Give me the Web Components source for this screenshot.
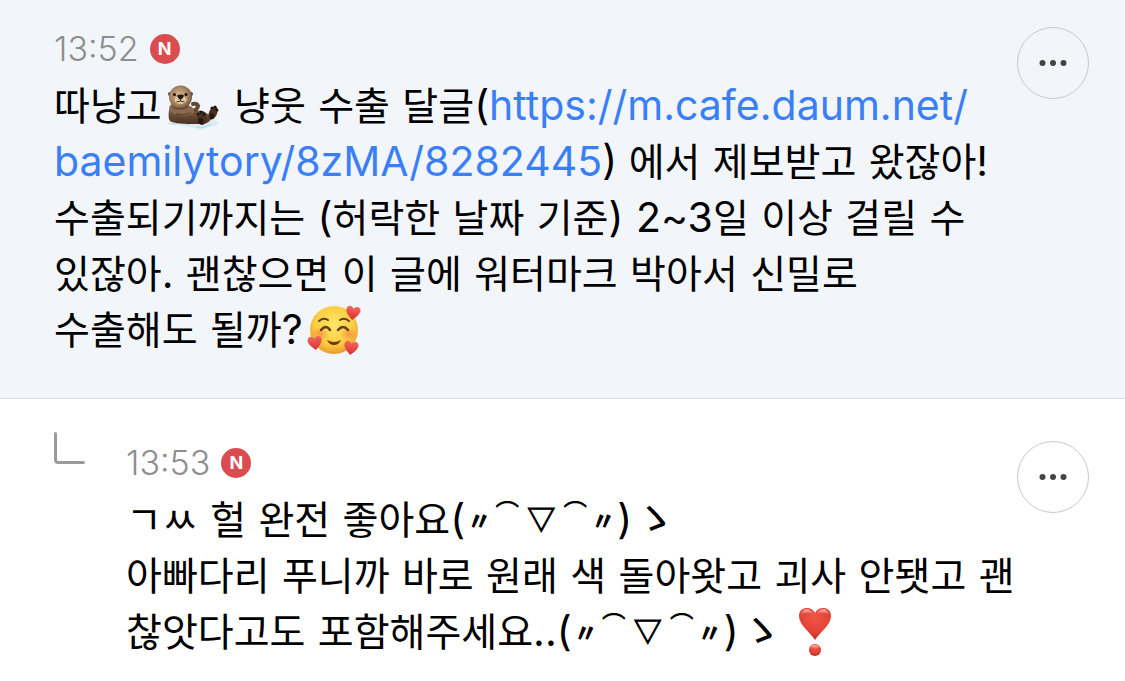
<!DOCTYPE html>
<html lang="ko">
<head>
<meta charset="utf-8">
<meta name="viewport" content="width=device-width, initial-scale=1">
<title>댓글</title>
<style>
  body {
    margin: 0;
    background-color: #fff;
    color: #000;
    font-family: Inter, "Noto Sans CJK KR", sans-serif;
  }
</style>
</head>
<body>
<main>
  <comment-item time="13:52" bg="new">
    <text-line>따냥고<emoji-icon name="otter"></emoji-icon> 냥웃 수출 달글<latin-text>(</latin-text><text-link href="https://m.cafe.daum.net/baemilytory/8zMA/8282445">https://m.cafe.daum.net/</text-link></text-line>
    <text-line><text-link href="https://m.cafe.daum.net/baemilytory/8zMA/8282445">baemilytory/8zMA/8282445</text-link><latin-text>) </latin-text>에서 제보받고 왔잖아<latin-text>!</latin-text></text-line>
    <text-line>수출되기까지는 <latin-text>(</latin-text>허락한 날짜 기준<latin-text>)</latin-text> <latin-text>2~3</latin-text>일 이상 걸릴 수</text-line>
    <text-line>있잖아<latin-text>.</latin-text> 괜찮으면 이 글에 워터마크 박아서 신밀로</text-line>
    <text-line>수출해도 될까<latin-text>?</latin-text><emoji-icon name="smile"></emoji-icon></text-line>
  </comment-item>
  <comment-item time="13:53" reply>
    <text-line>ㄱㅆ 헐 완전 좋아요<latin-text>(</latin-text><kao-face>〃</kao-face><kao-face part="arc">⌒</kao-face><kao-face part="mouth">▽</kao-face><kao-face part="arc">⌒</kao-face><kao-face>〃</kao-face><latin-text>)</latin-text><kao-face part="hand">ゝ</kao-face></text-line>
    <text-line>아빠다리 푸니까 바로 원래 색 돌아왓고 괴사 안됏고 괜</text-line>
    <text-line>찮앗다고도 포함해주세요<latin-text>..(</latin-text><kao-face>〃</kao-face><kao-face part="arc">⌒</kao-face><kao-face part="mouth">▽</kao-face><kao-face part="arc">⌒</kao-face><kao-face>〃</kao-face><latin-text>)</latin-text><kao-face part="hand">ゝ</kao-face><emoji-icon name="heart"></emoji-icon></text-line>
  </comment-item>
</main>

<script>
const comment_item = document.createElement('template');
comment_item.innerHTML = /*html*/ `
<style>
  :host {
    display: block;
    padding: 27px 36px 39px 54px;
  }

  :host([bg=new]) {
    background-color: #f2f6fb;
    border-bottom: 1px solid #d9dbde;
  }

  :host([reply]) {
    padding-top: 42px;
    padding-bottom: 20px;
  }

  article {
    display: flex;
    align-items: flex-start;
  }

  #branch {
    display: none;
    flex: none;
    width: 72px;
    margin-top: -9px;
  }

  :host([reply]) #branch {
    display: block;
  }

  #content {
    flex: 1;
    min-width: 0;
  }

  header {
    display: flex;
    align-items: center;
    gap: 11px;
    height: 44px;
    margin-bottom: 8px;
  }

  time {
    color: #8e8e8e;
    font-size: 34px;
    font-weight: 300;
    line-height: 44px;
  }
</style>

<article>
  <div id="branch">
    <svg width="32" height="34" viewBox="0 0 32 34" fill="none" stroke="#9b9b9b" stroke-width="3" stroke-linecap="round" aria-hidden="true">
      <path d="M1.5 1.5V27.5Q1.5 30.5 4.500 30.500H29.500"/>
    </svg>
  </div>
  <div id="content">
    <header><time></time><new-badge></new-badge></header>
    <slot></slot>
  </div>
  <more-button></more-button>
</article>
`

class CommentItem extends HTMLElement {
  constructor() {
    super();

    this.attachShadow({ mode: "open" });
    this.shadowRoot.appendChild(comment_item.content.cloneNode(true));
  }

  static get observedAttributes() {
    return ['time'];
  }

  attributeChangedCallback(name, oldVal, newVal) {
    this.shadowRoot.querySelector('time').textContent = newVal;
  }
}

const new_badge = document.createElement('template');
new_badge.innerHTML = /*html*/ `
<style>
  :host {
    display: flex;
    justify-content: center;
    align-items: center;
    width: 30px;
    height: 30px;
    border-radius: 50%;
    background-color: #db4c50;
    color: #fff;
    font-size: 18px;
    font-weight: 700;
    line-height: 30px;
  }
</style>
<span>N</span>
`

class NewBadge extends HTMLElement {
  constructor() {
    super();

    this.attachShadow({ mode: "open" });
    this.shadowRoot.appendChild(new_badge.content.cloneNode(true));
  }
}

const more_button = document.createElement('template');
more_button.innerHTML = /*html*/ `
<style>
  :host {
    display: block;
    flex: none;
  }

  button {
    display: flex;
    justify-content: center;
    align-items: center;
    width: 72px;
    height: 72px;
    padding: 0;
    border: 1px solid #c6c8ca;
    border-radius: 50%;
    background: transparent;
    cursor: pointer;
  }
</style>
<button type="button" aria-label="더보기">
  <svg width="28" height="8" viewBox="0 0 28 8" fill="#444" aria-hidden="true">
    <circle cx="3.500" cy="4" r="3"/>
    <circle cx="14" cy="4" r="3"/>
    <circle cx="24.500" cy="4" r="3"/>
  </svg>
</button>
`

class MoreButton extends HTMLElement {
  constructor() {
    super();

    this.attachShadow({ mode: "open" });
    this.shadowRoot.appendChild(more_button.content.cloneNode(true));
  }
}

const text_line = document.createElement('template');
text_line.innerHTML = /*html*/ `
<style>
  :host {
    display: block;
    height: 56px;
    font-family: "DejaVu Sans", "Noto Sans CJK KR", sans-serif;
    font-size: 39px;
    line-height: 56px;
    white-space: nowrap;
  }
</style>
<slot></slot>
`

class TextLine extends HTMLElement {
  constructor() {
    super();

    this.attachShadow({ mode: "open" });
    this.shadowRoot.appendChild(text_line.content.cloneNode(true));
  }
}

// inline elements: no white space around the slot, it would be drawn
const text_link = document.createElement('template');
text_link.innerHTML = /*html*/ `<style>
  a {
    color: #3a7ff6;
    font-family: Inter, sans-serif;
    font-size: 41px;
    line-height: 1;
    text-decoration: none;
  }
</style><a><slot></slot></a>`

class TextLink extends HTMLElement {
  constructor() {
    super();

    this.attachShadow({ mode: "open" });
    this.shadowRoot.appendChild(text_link.content.cloneNode(true));
  }

  static get observedAttributes() {
    return ['href'];
  }

  attributeChangedCallback(name, oldVal, newVal) {
    this.shadowRoot.querySelector('a').setAttribute('href', newVal);
  }
}

const latin_text = document.createElement('template');
latin_text.innerHTML = /*html*/ `<style>
  :host {
    font-family: Inter, sans-serif;
    font-size: 41px;
    line-height: 1;
  }
</style><slot></slot>`

class LatinText extends HTMLElement {
  constructor() {
    super();

    this.attachShadow({ mode: "open" });
    this.shadowRoot.appendChild(latin_text.content.cloneNode(true));
  }
}

const kao_face = document.createElement('template');
kao_face.innerHTML = /*html*/ `<style>
  :host {
    padding: 0 2px;
    font-family: "Noto Sans CJK KR", sans-serif;
    font-size: 24px;
    font-weight: 500;
    line-height: 0;
    vertical-align: 4px;
    -webkit-text-stroke: 1px currentColor;
  }

  :host([part=arc]) {
    vertical-align: 12px;
    -webkit-text-stroke: 0;
  }

  :host([part=mouth]) {
    padding: 0 6px;
    font-size: 28px;
  }

  :host([part=hand]) {
    padding: 0;
    font-size: 44px;
    font-weight: 400;
    vertical-align: baseline;
    -webkit-text-stroke: 0;
  }
</style><slot></slot>`

class KaoFace extends HTMLElement {
  constructor() {
    super();

    this.attachShadow({ mode: "open" });
    this.shadowRoot.appendChild(kao_face.content.cloneNode(true));
  }
}

const emojis = {
  otter: /*html*/ `
    <svg width="56" height="50" viewBox="0 -3 56 50" role="img" aria-label="수달">
      <defs>
        <linearGradient id="fur" x1="0" y1="0" x2="0" y2="1">
          <stop offset="0" stop-color="#9a7859"/><stop offset="1" stop-color="#4a3020"/>
        </linearGradient>
        <radialGradient id="head" cx=".45" cy=".45" r=".6">
          <stop offset="0" stop-color="#d8b995"/><stop offset=".65" stop-color="#a68260"/><stop offset="1" stop-color="#654732"/>
        </radialGradient>
      </defs>
      <path d="M1 38Q-1 41 11 41Q24 43 30 45Q37 47 43 43Q54 41 52 38Q50 35 43 37Z" fill="#dcebf4"/>
      <path d="M5 40Q15 38 24 41M30 43Q38 45 45 40" fill="none" stroke="#b5d6e7"/>
      <path d="M4 22Q1 33 4 37Q8 40 27 40H37Q44 39 46 33Q39 27 30 26L25 23Q17 16 7 18Z" fill="url(#fur)"/>
      <path d="M24 28Q31 27 32 22Q31 19 27 20" fill="none" stroke="#644832" stroke-width="4" stroke-linecap="round"/>
      <circle cx="4" cy="10" r="2" fill="#60432f"/><circle cx="25" cy="10" r="2" fill="#60432f"/>
      <ellipse cx="14.500" cy="13" rx="11.500" ry="11.500" fill="url(#head)"/>
      <path d="M4 21Q11 28 24 22Q29 24 28 29Q21 34 8 30Q2 27 4 21Z" fill="#8a6950"/>
      <path d="M6 23Q13 27 22 23M10 30Q18 32 25 29" fill="none" stroke="#553a27"/>
      <ellipse cx="14.500" cy="16" rx="6" ry="4" fill="#e0c6a6"/>
      <path d="M11 11.500Q14.500 9.500 18 11.500Q17 15 14.500 16Q12 15 11 11.500Z" fill="#211914"/>
      <path d="M14.500 15V17M10.500 18Q14.500 16 18.500 18" fill="none" stroke="#49311f"/>
      <circle cx="8.500" cy="10.500" r="1.500" fill="#19120e"/><circle cx="20" cy="10.500" r="1.500" fill="#19120e"/>
      <g fill="#49301f">
        <ellipse cx="36" cy="34" rx="5" ry="7"/>
        <ellipse cx="47" cy="29" rx="4" ry="7" transform="rotate(24 47 29)"/>
      </g>
      <g fill="#211610">
        <ellipse cx="35" cy="37" rx="2.500" ry="3"/>
        <circle cx="32" cy="30" r="1.500"/><circle cx="35" cy="28" r="1.500"/><circle cx="38" cy="30" r="1.500"/>
        <ellipse cx="46" cy="32" rx="2" ry="3"/>
        <circle cx="46" cy="24" r="1.500"/><circle cx="49" cy="23" r="1.500"/><circle cx="51" cy="26" r="1.500"/>
      </g>
    </svg>`,
  smile: /*html*/ `
    <svg width="56" height="50" viewBox="0 0 56 50" role="img" aria-label="하트와 웃는 얼굴">
      <defs>
        <radialGradient id="face" cx=".5" cy=".4" r=".62">
          <stop offset="0" stop-color="#ffe768"/><stop offset=".65" stop-color="#fbcd43"/><stop offset="1" stop-color="#e8962c"/>
        </radialGradient>
        <radialGradient id="blush">
          <stop offset="0" stop-color="#f4793d" stop-opacity=".65"/><stop offset="1" stop-color="#f4793d" stop-opacity="0"/>
        </radialGradient>
        <linearGradient id="love" x1="0" y1="0" x2="0" y2="1">
          <stop offset="0" stop-color="#f36a5c"/><stop offset="1" stop-color="#d92e32"/>
        </linearGradient>
        <path id="h" d="M0 7C-3 4-7 1-7-3C-7-8-1-8 0-4C2-8 8-7 7-2C6 2 3 4 0 7Z"/>
      </defs>
      <circle cx="27" cy="25" r="24" fill="url(#face)"/>
      <ellipse cx="13" cy="29" rx="9" ry="7" fill="url(#blush)"/><ellipse cx="42" cy="29" rx="9" ry="7" fill="url(#blush)"/>
      <g fill="none" stroke="#673e16" stroke-width="2" stroke-linecap="round">
        <path d="M12 16Q16 12 21 15M33 15Q38 12 42 16"/>
        <path d="M14 25Q19 19 23 25M31 25Q36 19 41 25" stroke-width="2.500"/>
      </g>
      <path d="M20 35Q27 39 34 35Q32 40 27 40Q22 40 20 35Z" fill="#6c3915"/>
      <g fill="url(#love)">
        <use href="#h" transform="translate(46 8) rotate(8)"/>
        <use href="#h" transform="translate(8 38) rotate(-8)"/>
        <use href="#h" transform="translate(44 43) rotate(8)"/>
      </g>
    </svg>`,
  heart: /*html*/ `
    <svg width="56" height="50" viewBox="0 0 56 50" role="img" aria-label="하트 느낌표">
      <defs>
        <radialGradient id="red" cx=".5" cy=".3" r=".65">
          <stop offset="0" stop-color="#ef5648"/><stop offset=".7" stop-color="#e34235"/><stop offset="1" stop-color="#bd302a"/>
        </radialGradient>
        <linearGradient id="shine" x1="0" y1="0" x2="0" y2="1">
          <stop offset="0" stop-color="#fff" stop-opacity=".6"/><stop offset="1" stop-color="#fff" stop-opacity="0"/>
        </linearGradient>
      </defs>
      <path d="M28 33C23 25 12 18 12 9C12-1 25-1 28 6C31-1 44-1 44 9C44 18 33 25 28 33Z" fill="url(#red)"/>
      <path d="M14 8C15 0 24 1 26 7Q20 4 14 8ZM30 7C32 1 41 0 42 8Q36 4 30 7Z" fill="url(#shine)"/>
      <circle cx="28" cy="43" r="6" fill="url(#red)"/>
      <ellipse cx="28" cy="40" rx="4" ry="2" fill="url(#shine)"/>
    </svg>`
};

class EmojiIcon extends HTMLElement {
  constructor() {
    super();

    this.attachShadow({ mode: "open" });
    this.shadowRoot.innerHTML = /*html*/ `
    <style>
      :host {
        display: inline-block;
        height: 50px;
        margin-left: 4px;
        line-height: 0;
        vertical-align: -11px;
      }
    </style>
    <span></span>
    `
  }

  static get observedAttributes() {
    return ['name'];
  }

  attributeChangedCallback(name, oldVal, newVal) {
    this.shadowRoot.querySelector('span').innerHTML = emojis[newVal];
  }
}

window.customElements.define('new-badge', NewBadge);
window.customElements.define('more-button', MoreButton);
window.customElements.define('comment-item', CommentItem);
window.customElements.define('text-line', TextLine);
window.customElements.define('text-link', TextLink);
window.customElements.define('latin-text', LatinText);
window.customElements.define('kao-face', KaoFace);
window.customElements.define('emoji-icon', EmojiIcon);
</script>
</body>
</html>
